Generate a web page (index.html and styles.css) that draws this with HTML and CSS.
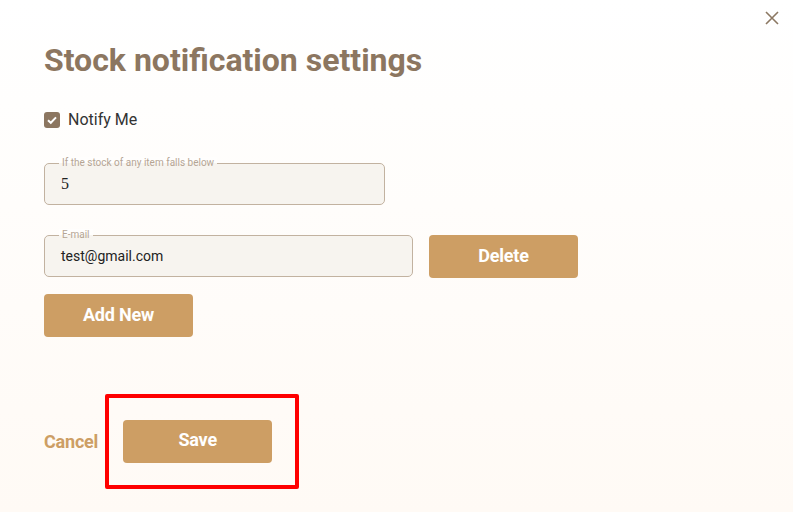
FILE: index.html
```html
<!DOCTYPE html>
<html>
<head>
<meta charset="utf-8">
<link rel="stylesheet" href="styles.css">
</head>
<body>
<div class="dialog">
  <button class="close" aria-label="Close">
    <svg width="14" height="14" viewBox="0 0 14 14"><path d="M1 1L13 13M13 1L1 13" stroke="#8c7862" stroke-width="1.6" fill="none"/></svg>
  </button>
  <h1 class="title">Stock notification settings</h1>
  <label class="check">
    <span class="box"><svg width="16" height="16" viewBox="0 0 16 16"><path d="M4 8.2L6.8 10.8L12 5.4" stroke="#fff" stroke-width="2" fill="none"/></svg></span>
    <span>Notify Me</span>
  </label>
  <div class="field field-stock">
    <span class="legend">If the stock of any item falls below</span>
    <span class="value num">5</span>
  </div>
  <div class="row">
    <div class="field field-mail">
      <span class="legend">E-mail</span>
      <span class="value">test@gmail.com</span>
    </div>
    <button class="btn">Delete</button>
  </div>
  <button class="btn add">Add New</button>
  <div class="footer">
    <button class="cancel">Cancel</button>
    <div class="save-wrap">
      <button class="btn save">Save</button>
      <span class="highlight"></span>
    </div>
  </div>
</div>
</body>
</html>
```
FILE: styles.css
```css
html, body { margin: 0; padding: 0; }
body {
  width: 793px; height: 512px; overflow: hidden;
  font-family: Roboto, "Liberation Sans", sans-serif;
  background: linear-gradient(#ffffff, #fffaf5);
}
.dialog { position: relative; padding: 40px 44px 0 44px; height: 472px; }
.close {
  position: absolute; top: 11px; right: 14px;
  border: 0; background: none; padding: 0; width: 14px; height: 14px; cursor: pointer;
}
.close svg { display: block; }
.title {
  margin: 0; font-size: 32px; font-weight: 700; color: #8c7660;
  line-height: 40px; letter-spacing: 0;
}
.check {
  display: flex; align-items: center; gap: 8px;
  margin-top: 30px; font-size: 16px; color: #333;
  line-height: 20px;
}
.box {
  width: 16px; height: 16px; border-radius: 3px; background: #8c7660;
  display: block;
}
.box svg { display: block; }
.field {
  position: relative; box-sizing: border-box; height: 42px;
  border: 1px solid #c2b2a0; border-radius: 5px; background: #f7f4ef;
  display: flex; align-items: center; padding: 0 16px;
}
.field-stock { width: 341px; margin-top: 33px; }
.field-mail { width: 369px; }
.legend {
  position: absolute; top: -7px; left: 14px; padding: 0 3px;
  font-size: 10px; line-height: 12px; color: #b5a594;
  background: linear-gradient(#fffefd 50%, #f7f4ef 50%);
}
.value { font-size: 14px; color: #222; }
.num { font-family: "Liberation Serif", serif; font-size: 16px; }
.row { display: flex; gap: 16px; margin-top: 30px; align-items: flex-start; }
.btn {
  border: 0; border-radius: 4px; background: #cd9e64; color: #fff;
  font-family: Roboto, "Liberation Sans", sans-serif; font-weight: 700;
  font-size: 18px; width: 149px; height: 43px; padding: 0 0 2px; cursor: pointer;
  letter-spacing: -0.2px;
}
.add { display: block; margin-top: 16px; padding-bottom: 3px; }
.footer { display: flex; align-items: center; margin-top: 83px; gap: 25px; }
.cancel {
  border: 0; background: none; padding: 0 0 1px;
  font-family: Roboto, "Liberation Sans", sans-serif; font-weight: 700;
  font-size: 18px; color: #cd9e64; letter-spacing: -0.2px;
}
.save-wrap { position: relative; }
.save { display: block; padding-bottom: 4px; }
.highlight {
  position: absolute; left: -18px; top: -26px; width: 186px; height: 87px;
  border: 4px solid #ff0000; border-radius: 2px; pointer-events: none;
}
```
